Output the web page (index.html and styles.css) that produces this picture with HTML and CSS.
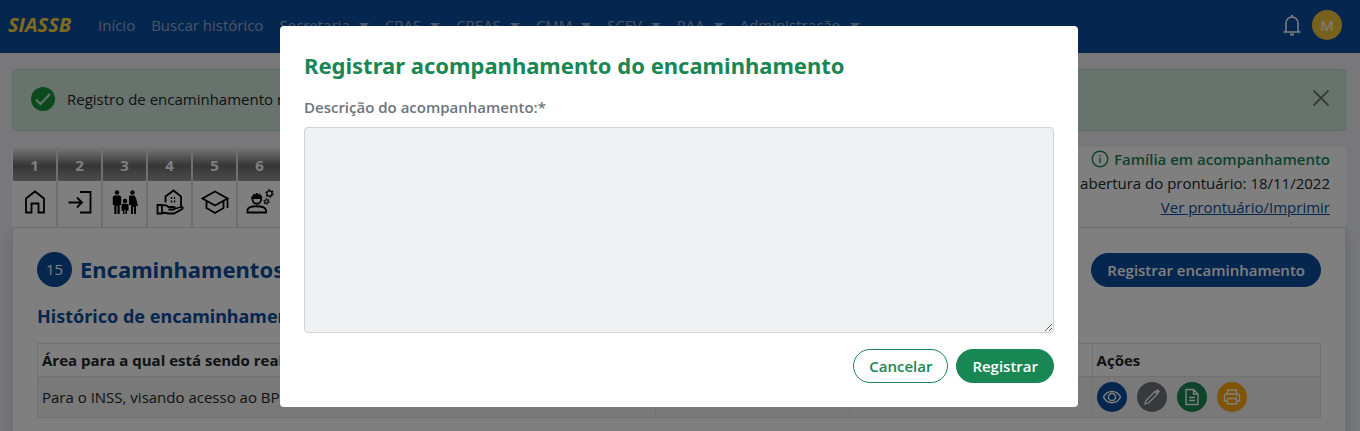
FILE: index.html
```html
<!DOCTYPE html>
<html lang="pt-BR">
<head>
<meta charset="utf-8">
<meta name="viewport" content="width=device-width, initial-scale=1">
<title>SIASSB - Encaminhamentos</title>
<link rel="stylesheet" href="styles.css">
</head>
<body>
<header class="navbar">
  <a class="brand" href="#">SIASSB</a>
  <nav class="menu">
    <a class="menu-link" href="#">Início</a>
    <a class="menu-link" href="#">Buscar histórico</a>
    <a class="menu-link has-caret" href="#">Secretaria</a>
    <a class="menu-link has-caret" href="#">CRAS</a>
    <a class="menu-link has-caret" href="#">CREAS</a>
    <a class="menu-link has-caret" href="#">CMM</a>
    <a class="menu-link has-caret" href="#">SCFV</a>
    <a class="menu-link has-caret" href="#">PAA</a>
    <a class="menu-link has-caret" href="#">Administração</a>
  </nav>
  <button class="bell" type="button" aria-label="Notificações">
    <svg width="20" height="24" viewBox="0 0 20 24" fill="none" stroke="currentColor" stroke-width="1.500"><path d="M4 18.500V10a6 6 0 0 1 12 0v8.500M1.500 19h17"/><path d="M10 2v2M8 21.500h4" stroke-width="2"/></svg>
  </button>
  <a class="avatar" href="#">M</a>
</header>

<main class="page">
  <div class="alert" role="status">
    <svg width="24" height="24" viewBox="0 0 24 24"><circle cx="12" cy="12" r="12" fill="#18943a"/><path d="M5 12.500l4.500 4.500L19 7" fill="none" stroke="#d1e7dd" stroke-width="2"/></svg>
    <span class="alert-text">Registro de encaminhamento realizado com sucesso!</span>
    <button class="close" type="button" aria-label="Fechar">
      <svg width="18" height="18" viewBox="0 0 18 18" fill="none" stroke="currentColor" stroke-width="1.800"><path d="M1.500 1.500l15 15M16.500 1.500l-15 15"/></svg>
    </button>
  </div>

  <div class="record-bar">
    <nav class="tabs">
      <a class="tab" href="#" aria-label="Domicílio"><span class="tab-number">1</span><span class="tab-icon">
        <svg width="28" height="28" viewBox="0 0 28 28" fill="none" stroke="#000" stroke-width="1.800"><path d="M5 24.500V10.500l9-7 9 7v14h-5.500v-9h-7v9z"/></svg></span></a>
      <a class="tab" href="#" aria-label="Ingresso"><span class="tab-number">2</span><span class="tab-icon">
        <svg width="28" height="28" viewBox="0 0 28 28" fill="none" stroke="#000" stroke-width="1.800"><path d="M2.500 14.500h13M11 9.500l5 5-5 5M14 4h10.500v20.500H14"/></svg></span></a>
      <a class="tab" href="#" aria-label="Família"><span class="tab-number">3</span><span class="tab-icon">
        <svg width="28" height="28" viewBox="0 0 28 28" fill="#000"><circle cx="6" cy="4.500" r="2.200"/><path d="M3 7.500h6l1.200 1.500v8H8.700v9H6.500v-8h-1v8H3.300v-9H1.800V9z"/><circle cx="21.500" cy="4.500" r="2.200"/><path d="M18.500 7.500h5L25 10l2 8h-2v8h-2v-7h-1v7h-2v-9h-2V9z"/><circle cx="14" cy="13" r="2.200"/><path d="M11.500 15.800h5l1 1v6H16V26h-1.500v-4h-1v4H12v-3.200h-1.500v-6z"/></svg></span></a>
      <a class="tab" href="#" aria-label="Habitação"><span class="tab-number">4</span><span class="tab-icon">
        <svg width="28" height="28" viewBox="0 0 28 28" fill="none" stroke="#000" stroke-width="1.800"><path d="M9.500 14.500V8.500L17.500 2.500l7.500 6V18"/><path d="M1.500 17H6v8.500H1.500zM6 18c2.500-1.500 4.500-1 6.500 1h5c2 0 2 2.500 0 2.500h-5M18 21l7-2c2-.500 2.500 1.500.500 2.500L18 25.500h-5L6 24.500"/><path stroke-width="1.400" d="M15.500 9v2M18.500 9v2M15.500 12.500v2M18.500 12.500v2"/></svg></span></a>
      <a class="tab" href="#" aria-label="Educação"><span class="tab-number">5</span><span class="tab-icon">
        <svg width="28" height="28" viewBox="0 0 28 28" fill="none" stroke="#000" stroke-width="1.800"><path d="M14 3.500L1.500 10.500 14 17.500l12.500-7zM5.500 13v7l8.500 5 8.500-5v-7M26.500 10.500V20"/></svg></span></a>
      <a class="tab" href="#" aria-label="Trabalho"><span class="tab-number">6</span><span class="tab-icon">
        <svg width="28" height="28" viewBox="0 0 28 28" fill="none" stroke="#000" stroke-width="1.800"><path d="M1.500 24.500V22c1-5 17-5 18.500 0v2.500z"/><path d="M6.500 10h8.500v1.500a4.250 4.250 0 0 1-8.500 0z"/><path d="M5.500 10.500h10.500C15.500 8 14.500 6.500 13 6v2l-1.500-2.500h-1L9 8V6c-1.500.500-3 2-3.500 4.500z" fill="#000" stroke-width="1"/><circle cx="23.500" cy="5.500" r="2.600" stroke-width="1.200"/><circle cx="23.500" cy="5.500" r="3.600" stroke-width="1.300" stroke-dasharray="1.800 1.970"/><circle cx="20.500" cy="13.500" r="1.700" stroke-width="1.100"/><circle cx="20.500" cy="13.500" r="2.600" stroke-width="1.100" stroke-dasharray="1.300 1.420"/></svg></span></a>
    </nav>
    <div class="record-info">
      <strong class="record-status"><svg width="18" height="18" viewBox="0 0 18 18" fill="none" stroke="currentColor" stroke-width="1.400"><circle cx="9" cy="9" r="7.800"/><path d="M9 8v5M9 5v1.500"/></svg>Família em acompanhamento</strong>
      <span>Data de abertura do prontuário: 18/11/2022</span>
      <a class="record-link" href="#">Ver prontuário/Imprimir</a>
    </div>
  </div>

  <section class="card">
    <div class="card-head">
      <span class="step">15</span>
      <h1 class="card-title">Encaminhamentos</h1>
      <button class="btn btn-blue" type="button">Registrar encaminhamento</button>
    </div>
    <h2 class="subtitle">Histórico de encaminhamentos</h2>
    <table class="history">
      <colgroup><col class="col-area"><col class="col-date"><col class="col-unit"><col class="col-actions"></colgroup>
      <thead><tr><th>Área para a qual está sendo realizado</th><th></th><th></th><th>Ações</th></tr></thead>
      <tbody><tr>
        <td>Para o INSS, visando acesso ao BPC</td><td></td><td></td>
        <td><div class="actions">
          <button class="action view" type="button" aria-label="Visualizar"><svg width="20" height="20" viewBox="0 0 20 20" fill="none" stroke="currentColor" stroke-width="1.500"><path d="M1.500 10C5 2.500 15 2.500 18.500 10 15 17.500 5 17.500 1.500 10z"/><circle cx="10" cy="10" r="3.600"/></svg></button>
          <button class="action edit" type="button" aria-label="Editar"><svg width="20" height="20" viewBox="0 0 20 20" fill="none" stroke="currentColor" stroke-width="1.300"><path d="M3 17l1-3.500 9-9L15.500 7l-9 9z"/><path d="M14.500 3l2.500 2.500" stroke-width="2.800"/></svg></button>
          <button class="action file" type="button" aria-label="Acompanhamento"><svg width="20" height="20" viewBox="0 0 20 20" fill="none" stroke="currentColor" stroke-width="1.400"><path d="M4 2.500h7.500L16 7v10.500H4zM11.500 2.500V7H16M7 10.500h6M7 13.500h6"/></svg></button>
          <button class="action print" type="button" aria-label="Imprimir"><svg width="20" height="20" viewBox="0 0 20 20" fill="none" stroke="currentColor" stroke-width="1.300"><path d="M5.500 7V3h9v4M5.500 14H2.500V9c0-1 .5-2 2-2h11c1.500 0 2 1 2 2v5h-3M5.500 11.500h9V17h-9zM14 9.200h1.500"/></svg></button>
        </div></td>
      </tr></tbody>
    </table>
  </section>
</main>

<div class="backdrop">
  <form class="modal" role="dialog" aria-modal="true" aria-labelledby="modal-title">
    <h2 class="modal-title" id="modal-title">Registrar acompanhamento do encaminhamento</h2>
    <label class="field-label" for="descricao">Descrição do acompanhamento:*</label>
    <textarea class="field" id="descricao" rows="8" required></textarea>
    <div class="modal-actions">
      <button class="btn btn-outline" type="button">Cancelar</button>
      <button class="btn btn-green" type="submit">Registrar</button>
    </div>
  </form>
</div>
</body>
</html>
```
FILE: styles.css
```css
* { box-sizing: border-box; }

body {
  margin: 0;
  min-height: 100vh;
  display: flex;
  flex-direction: column;
  background: #f0f1f5;
  color: #212529;
  font-family: "Open Sans", "Noto Sans", sans-serif;
  font-size: 15px;
  line-height: 24px;
}

h1, h2 { margin: 0; font-family: "Noto Sans", "Open Sans", sans-serif; }

button { font: inherit; cursor: pointer; }

.navbar {
  display: flex;
  align-items: center;
  height: 53px;
  padding: 0 18px 4px 8px;
  background: #0a4d9c;
}

.brand {
  width: 82px;
  color: #ffd53d;
  font-size: 20px;
  font-weight: 700;
  font-style: italic;
  text-decoration: none;
}

.menu { display: flex; flex: 1; }

.menu-link {
  padding: 0 8px;
  color: rgba(255, 255, 255, .55);
  text-decoration: none;
  white-space: nowrap;
}

.has-caret::after {
  content: "";
  display: inline-block;
  margin-left: 9px;
  vertical-align: 3px;
  border: 5px solid transparent;
  border-top-color: currentColor;
  border-bottom: 0;
}

.bell {
  display: flex;
  margin-right: 10px;
  padding: 0;
  border: 0;
  background: none;
  color: #fff;
}

.avatar {
  width: 30px;
  height: 30px;
  border-radius: 50%;
  background: #f0c33c;
  color: #fff;
  line-height: 30px;
  text-align: center;
  text-decoration: none;
}

.page {
  flex: 1;
  display: flex;
  flex-direction: column;
  padding: 16px 14px 0 12px;
}

.alert {
  display: flex;
  align-items: center;
  min-height: 62px;
  margin-bottom: 16px;
  padding: 0 15px 2px 18px;
  border: 1px solid #badbcc;
  border-radius: 4px;
  background: #d1e7dd;
}

.alert-text { flex: 1; margin-left: 12px; }

.close {
  display: flex;
  padding: 0;
  margin-bottom: 2px;
  border: 0;
  background: none;
  color: #687a70;
}

.record-bar {
  display: flex;
  justify-content: space-between;
  padding-left: 1px;
  background: #fff;
}

.tabs { display: flex; gap: 2px; background: #dedede; }

.tab {
  width: 43px;
  background: #fff;
  text-align: center;
  text-decoration: none;
}

.tab-number {
  display: block;
  height: 34px;
  background: linear-gradient(#f0f0f0, #6c6c6c 55%, #999);
  color: #fff;
  font-weight: 700;
  line-height: 36px;
}

.tab-icon { display: flex; justify-content: center; padding: 7px 0 11px; }

.record-info {
  display: flex;
  flex-direction: column;
  align-items: flex-end;
  padding-right: 16px;
}

.record-status {
  display: flex;
  align-items: center;
  gap: 5px;
  color: #198754;
  font-weight: 600;
}

.record-link { color: #0a4d9c; }

.card {
  flex: 1;
  padding: 24px;
  border: 1px solid #dfdfdf;
  border-bottom: 0;
  background: #fff;
  box-shadow: 0 8px 16px rgba(0, 0, 0, .15);
}

.card-head { display: flex; align-items: center; }

.step {
  width: 35px;
  height: 35px;
  margin-right: 8px;
  border-radius: 50%;
  background: #0a4d9c;
  color: #fff;
  line-height: 35px;
  text-align: center;
}

.card-title {
  flex: 1;
  color: #0a4d9c;
  font-size: 22px;
  line-height: 35px;
}

.subtitle {
  margin: 14px 0 12px;
  color: #0a4d9c;
  font-size: 18px;
  line-height: 30px;
}

.history {
  width: 100%;
  border-collapse: collapse;
  table-layout: fixed;
}

.history th, .history td {
  padding: 4px;
  border: 1px solid #dee2e6;
  text-align: left;
  white-space: nowrap;
}

.history td { background: #f2f2f2; }

.col-area { width: 48.2%; }
.col-date { width: 15.1%; }
.col-unit { width: 18.9%; }

.actions { display: flex; gap: 10px; padding: 1px 0; }

.action {
  display: flex;
  align-items: center;
  justify-content: center;
  width: 30px;
  height: 30px;
  padding: 0;
  border: 0;
  border-radius: 50%;
  color: #fff;
}

.view { background: #0a4d9c; }
.edit { background: #6c757d; }
.file { background: #198754; }
.print { background: #ffa90a; }

.btn {
  height: 34px;
  padding: 0 15px;
  border: 1px solid;
  border-radius: 17px;
  font-weight: 600;
  line-height: 24px;
}

.btn-blue { border-color: #0a4d9c; background: #0a4d9c; color: #fff; }
.btn-green { border-color: #198754; background: #198754; color: #fff; }
.btn-outline { border-color: #198754; background: #fff; color: #198754; }

.backdrop {
  position: fixed;
  inset: 0;
  padding: 26px 2px 24px 0;
  overflow: auto;
  background: rgba(0, 0, 0, .5);
}

.modal {
  display: flex;
  flex-direction: column;
  max-width: 798px;
  margin: 0 auto;
  padding: 24px;
  border-radius: 4px;
  background: #fff;
}

.modal-title {
  margin-bottom: 15px;
  color: #198754;
  font-size: 22px;
  line-height: 30px;
}

.field-label {
  margin-bottom: 8px;
  color: #6c757d;
  font-weight: 600;
}

.field {
  min-height: 206px;
  border: 1px solid #ced4da;
  border-radius: 4px;
  background: #f0f1f3;
  font: inherit;
  resize: vertical;
}

.modal-actions {
  display: flex;
  justify-content: flex-end;
  gap: 8px;
  margin-top: 16px;
}
```
